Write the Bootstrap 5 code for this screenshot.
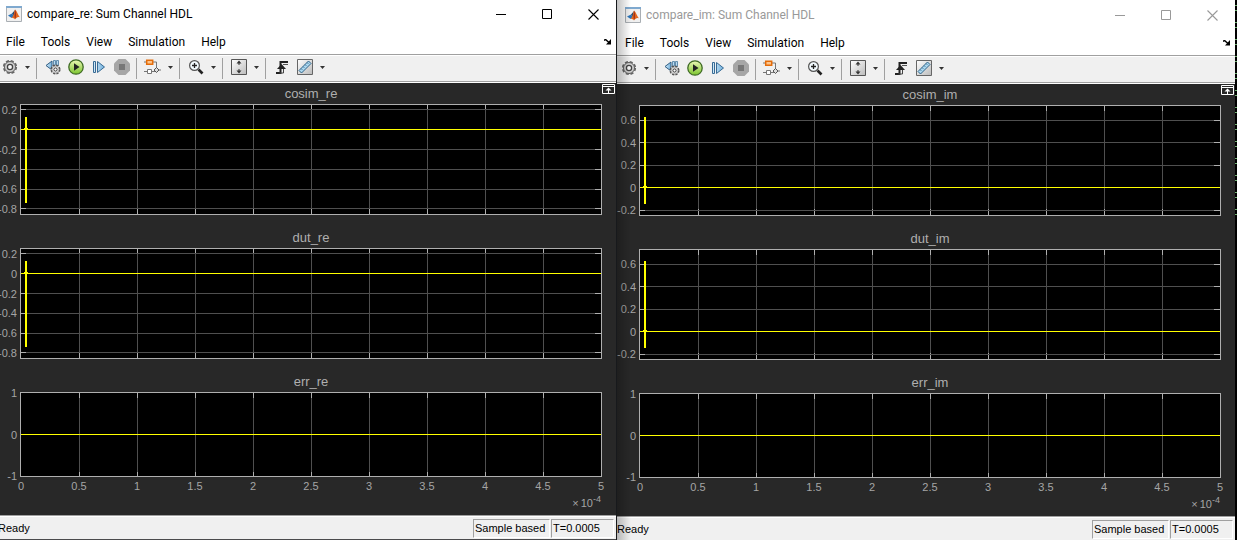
<!DOCTYPE html>
<html lang="en">
<head>
<meta charset="utf-8">
<meta name="viewport" content="width=device-width, initial-scale=1">
<title>Scopes: Sum Channel HDL</title>
<link href="https://cdn.jsdelivr.net/npm/bootstrap@5.3.0/dist/css/bootstrap.min.css" rel="stylesheet">
<style>
  body { background: #4a4a4c; font-family: Roboto, "Noto Sans", sans-serif; font-size: 12px; line-height: 16px; color: #000; }
  .desk { min-height: 100vh; }
  .scope { flex: 1 1 0; min-width: 0; background: #fff; }
  .scope-front { margin-left: -2px; margin-bottom: 1px; }
  .scope-back { padding-top: 1px; }
  .scope-back .shade { position: absolute; inset: 0 auto 0 0; width: 14px; pointer-events: none; background: linear-gradient(90deg, rgba(0,0,0,.24), rgba(0,0,0,0)); }
  .seam { width: 1px; background: #17191c; }
  .edge { width: 2px; background: repeating-linear-gradient(#000 0 11px, #6fb070 11px 12px, #000 12px 16px, #6fb070 16px 17px) 0 -6px / 100% 222px no-repeat, #000; }
  .titlebar { height: 28px; padding-left: 8px; }
  .caption { padding-left: 5px; }
  .winbtn { width: 46px; height: 26px; display: flex; align-items: center; justify-content: center; border: 0; background: none; padding: 0; color: #000; }
  .scope-back .titlebar { color: #999; }
  .scope-back .winbtn { color: #999; }
  .menus { height: 26px; padding-left: 8px; padding-top: 2px; gap: 16px; border: 0; }
  .menus button, .tools button { border: 0; background: none; padding: 0; color: #000; }
  .tools { height: 29px; background: #f0f0f0; border-top: 1px solid #a0a0a0; border-bottom: 1px solid #fff; box-shadow: inset 0 1px #fff, inset 0 -1px #a0a0a0; padding: 0 0 3px 1px; }
  .tools button { display: flex; align-items: center; justify-content: center; height: 22px; width: 23px; }
  .tools button.first { width: 22px; }
  .tools button.drop { width: 18px; margin-left: -3px; }
  .rule { width: 1px; height: 21px; background: #a0a0a0; margin: 2px 4px 0 0; }
  .rule-spaced { margin-left: 3px; }
  .tools svg, .titlebar svg { display: block; }
  .plots { background: #282828; padding: 21px 14px 38px 22px; gap: 33px; overflow: hidden; font-family: "Liberation Sans", Arial, sans-serif; }
  .axes { flex: 111 1 0; min-height: 60px; width: 100%; display: block; overflow: visible; background: #000; border: 1px solid #afafaf; }
  .axes-short { flex-grow: 85; }
  .axes text { font-size: 11px; fill: #a5a5a5; }
  .axes text.head { font-size: 13px; fill: #afafaf; }
  .axes line { shape-rendering: crispEdges; stroke-width: 1px; }
  .grid-line { stroke: #4f4f4f; }
  .tick { stroke: #afafaf; }
  .axes line.trace { stroke: #ff0; }
  .axes line.burst { stroke: #ff0; stroke-width: 2px; }
  .dock { position: absolute; top: 1px; right: 1px; border: 0; padding: 0; background: none; line-height: 0; }
  .statusbar { height: 24px; background: #f0f0f0; border-top: 1px solid #a0a0a0; box-shadow: inset 0 1px #fff; padding: 3px 2px 0 0; font-family: "Liberation Sans", Arial, sans-serif; font-size: 11px; }
  .ready { padding-top: 1px; }
  .cell { height: 19px; border: 1px solid; border-color: #a0a0a0 #fff #fff #a0a0a0; padding-left: 1px; margin-left: 1px; line-height: 17px; }
  .mode { width: 77px; }
  .clock { width: 63px; }
</style>
<script src="https://cdn.jsdelivr.net/npm/bootstrap@5.3.0/dist/js/bootstrap.bundle.min.js"></script>
</head>
<body>
<svg width="0" height="0" class="position-absolute" aria-hidden="true">
  <defs>
    <linearGradient id="metal" x2="1" y2="1"><stop stop-color="#fff"/><stop offset="1" stop-color="#bbb"/></linearGradient>
    <linearGradient id="green" x2="0" y2="1"><stop stop-color="#edf8b8"/><stop offset="1" stop-color="#7ac42c"/></linearGradient>
    <linearGradient id="blue" x2="1"><stop stop-color="#d6edfa"/><stop offset="1" stop-color="#6faedb"/></linearGradient>
    <symbol id="i-matlab" viewBox="0 0 16 16"><path d="M.5.5h15v15H.5z" fill="#f0f0f0" stroke="#a9aeb3"/><path d="M0 0h16v2H0z" fill="#7fa9cf"/><path d="M2 9.500 6 7.500 8 10 5.500 12z" fill="#2b74b8"/><path d="M6 7.500 9 4 8 10z" fill="#224a72"/><path d="M9 3.500C11 5 12 9 14 11.500 12 10.500 10.500 11.500 9 13.500 8.500 12 7 12 5.500 12 8 10 8 6 9 3.500z" fill="#e4651c"/><path d="M9 3.500C10 6 10 9 9.500 12.500 8 12 9 7 9 3.500z" fill="#8c2418"/></symbol>
    <symbol id="i-gear" viewBox="0 0 16 16"><circle cx="8" cy="8" r="6.300" fill="none" stroke="#666" stroke-width="1.600" stroke-dasharray="3.100 1.850"/><circle cx="8" cy="8" r="5.500" fill="#cfcfcf" stroke="#5c5c5c"/><circle cx="8" cy="8" r="2.600" fill="#f8f8f8" stroke="#444" stroke-width="1.300"/></symbol>
    <symbol id="i-drop" viewBox="0 0 5 3"><path d="M0 0h5L2.500 3z" fill="#333"/></symbol>
    <symbol id="i-config" viewBox="0 0 16 16"><path d="M7 2v9L1 6.500z" fill="url(#blue)" stroke="#315d82"/><path d="M8.500 1.500h2v5h-2zM11.500 1.500h2v5h-2z" fill="#b9dbf0" stroke="#47799f" stroke-width=".8"/><circle cx="10.500" cy="10.500" r="4.300" fill="#ddd" stroke="#555" stroke-width="1.500" stroke-dasharray="2.200 1.200"/><circle cx="10.500" cy="10.500" r="3.500" fill="#e8e8e8" stroke="#777" stroke-width=".6"/><circle cx="10.500" cy="10.500" r="1.600" fill="#fff" stroke="#333"/></symbol>
    <symbol id="i-run" viewBox="0 0 16 16"><circle cx="8" cy="8" r="7.200" fill="url(#green)" stroke="#3f6b25" stroke-width="1.300"/><path d="M6 4.200 11.500 8 6 11.800z" fill="#222"/></symbol>
    <symbol id="i-step" viewBox="0 0 14 14"><path d="M1.500 1.500h2v11h-2zM5.500 1.500v11L12.500 7z" fill="url(#blue)" stroke="#376a94"/></symbol>
    <symbol id="i-stop" viewBox="0 0 16 16"><path d="M4.500 0h7L16 4.500v7L11.500 16h-7L0 11.500v-7z" fill="#a6a6a6"/><path d="M5 5h6v6H5z" fill="#777"/></symbol>
    <symbol id="i-blocks" viewBox="0 0 17 16"><path d="M0 3h3M9 3h3.500v8M0 12.500h3M8 12.500h3M14 11h3" stroke="#777" fill="none"/><path d="M2.700 1.200h6v4h-6z" fill="#ffc58a" stroke="#e46c0a" stroke-width="1.500"/><path d="M3.500 10.500h4v4h-4z" fill="#fff" stroke="#777"/><path d="m12.500 8.500 2.500 2.500-2.500 2.500-2.500-2.500z" fill="#ddd" stroke="#555"/></symbol>
    <symbol id="i-zoom" viewBox="0 0 16 16"><circle cx="6.500" cy="6.500" r="4.900" fill="#f3fbff" stroke="#555" stroke-width="1.200"/><path d="M4 6.500h5M6.500 4v5" stroke="#222" stroke-width="1.300"/><path d="m10.500 10.500 4 4" stroke="#222" stroke-width="2.600"/></symbol>
    <symbol id="i-fit" viewBox="0 0 16 16"><path d="M.5.500h15v15H.5z" fill="url(#metal)" stroke="#555"/><path d="M8 1.500 5.500 4.500h2V6h1V4.500h2zM8 14.500 5.500 11.500h2V10h1v1.500h2z" fill="#333"/></symbol>
    <symbol id="i-trigger" viewBox="0 0 14 16"><path d="M1 14h4.500V3H13" fill="none" stroke="#222" stroke-width="2"/><path d="M4.500 14h4V8" fill="none" stroke="#444"/><path d="M2 10h9L6.500 5z" fill="#222"/><path d="M8 5.500h5" stroke="#555"/></symbol>
    <symbol id="i-ruler" viewBox="0 0 16 16"><path d="M.5.500h15v15H.5z" fill="url(#metal)" stroke="#666"/><path d="M2 11.500 11.500 2 14 4.500 4.500 14z" fill="#acd8ef" stroke="#2e6389"/><path d="m4 9.500 1.500 1.500M6 7.500 7.500 9M8 5.500 9.500 7M10 3.500 11.500 5" stroke="#2e6389" stroke-width=".7"/></symbol>
    <symbol id="i-min" viewBox="0 0 11 11"><path d="M0 5.500h10" stroke="currentColor"/></symbol>
    <symbol id="i-max" viewBox="0 0 11 11"><path d="M.5.500h9v9h-9z" fill="none" stroke="currentColor"/></symbol>
    <symbol id="i-close" viewBox="0 0 11 11"><path d="m.5.500 10 10M10.500.500l-10 10" stroke="currentColor" stroke-width="1.100"/></symbol>
    <symbol id="i-corner" viewBox="0 0 8 6"><path d="M0 1.500 1.500.500 5 3.500" fill="none" stroke="#000" stroke-width="1.500"/><path d="M7 0v5.500H2z" fill="#000"/></symbol>
    <symbol id="i-dock" viewBox="0 0 13 10"><path d="M.5.500h12v9H.5zM0 2.500h13M6.500 9V5" fill="none" stroke="#fff"/><path d="M3.500 6.500 6.500 3.500l3 3z" fill="#fff"/></symbol>
  </defs>
</svg>

<main class="desk d-flex"></main>

<template id="scope-template">
  <section class="scope position-relative d-flex flex-column">
    <header class="titlebar d-flex align-items-center">
      <svg width="16" height="16"><use href="#i-matlab"/></svg>
      <span class="caption flex-grow-1 text-nowrap"></span>
      <button class="winbtn" aria-label="Minimize"><svg width="11" height="11"><use href="#i-min"/></svg></button>
      <button class="winbtn" aria-label="Maximize"><svg width="11" height="11"><use href="#i-max"/></svg></button>
      <button class="winbtn" aria-label="Close"><svg width="11" height="11"><use href="#i-close"/></svg></button>
    </header>
    <nav class="menus d-flex align-items-center">
      <button>File</button><button>Tools</button><button>View</button><button>Simulation</button><button>Help</button>
      <button class="ms-auto me-1 d-flex" aria-label="Dock"><svg width="8" height="6"><use href="#i-corner"/></svg></button>
    </nav>
    <div class="tools d-flex align-items-center">
      <button class="first" aria-label="Settings"><svg width="16" height="16"><use href="#i-gear"/></svg></button>
      <button class="drop" aria-label="More settings"><svg width="5" height="3"><use href="#i-drop"/></svg></button>
      <span class="rule"></span>
      <button aria-label="Configure"><svg width="16" height="16"><use href="#i-config"/></svg></button>
      <button aria-label="Run"><svg width="16" height="16"><use href="#i-run"/></svg></button>
      <button aria-label="Step"><svg width="14" height="14"><use href="#i-step"/></svg></button>
      <button aria-label="Stop"><svg width="16" height="16"><use href="#i-stop"/></svg></button>
      <span class="rule rule-spaced"></span>
      <button aria-label="Highlight block"><svg width="17" height="16"><use href="#i-blocks"/></svg></button>
      <button class="drop" aria-label="More blocks"><svg width="5" height="3"><use href="#i-drop"/></svg></button>
      <span class="rule"></span>
      <button aria-label="Zoom"><svg width="16" height="16"><use href="#i-zoom"/></svg></button>
      <button class="drop" aria-label="More zoom"><svg width="5" height="3"><use href="#i-drop"/></svg></button>
      <span class="rule"></span>
      <button aria-label="Scale"><svg width="16" height="16"><use href="#i-fit"/></svg></button>
      <button class="drop" aria-label="More scaling"><svg width="5" height="3"><use href="#i-drop"/></svg></button>
      <span class="rule"></span>
      <button aria-label="Triggers"><svg width="14" height="16"><use href="#i-trigger"/></svg></button>
      <button aria-label="Measurements"><svg width="16" height="16"><use href="#i-ruler"/></svg></button>
      <button class="drop" aria-label="More measurements"><svg width="5" height="3"><use href="#i-drop"/></svg></button>
    </div>
    <div class="plots position-relative d-flex flex-column flex-grow-1">
      <button class="dock" aria-label="Maximize axes"><svg width="13" height="10"><use href="#i-dock"/></svg></button>
    </div>
    <footer class="statusbar d-flex align-items-start">
      <span class="ready flex-grow-1">Ready</span><span class="cell mode">Sample based</span><span class="cell clock">T=0.0005</span>
    </footer>
    <div class="shade"></div>
  </section>
</template>

<script>
  // Each scope: signal suffix, value range, labelled levels and the burst near t = 0.
  const scopes = [
    { part: 're', top: 0.25, bottom: -0.85, ticks: [0.2, 0, -0.2, -0.4, -0.6, -0.8], burst: [0.13, -0.74], kind: 'scope-front' },
    { part: 'im', top: 0.725, bottom: -0.24, ticks: [0.6, 0.4, 0.2, 0, -0.2], burst: [0.63, -0.14], kind: 'scope-back' }
  ];

  function axes(title, a, isLast) {
    const y = v => (a.top - v) / (a.top - a.bottom) * 100 + '%';
    const line = (cls, x1, y1, x2, y2, move = '') =>
      `<line class="${cls}" x1="${x1}" y1="${y1}" x2="${x2}" y2="${y2}" ${move && `transform="translate(${move})"`}/>`;
    let s = `<text class="head" x="50%" y="-7" text-anchor="middle">${title}</text>`;
    for (let i = 1; i < 10; i++) {
      const x = i * 10 + '%';
      s += line('grid-line', x, '0', x, '100%') + line('tick', x, '0', x, '5');
      s += line('tick', x, '100%', x, '95%');
    }
    for (const v of a.ticks) {
      if (v !== a.top && v !== a.bottom)
        s += line('grid-line', '0', y(v), '100%', y(v)) + line('tick', '0', y(v), '5', y(v)) + line('tick', '99%', y(v), '100%', y(v));
      s += `<text x="-4" y="${y(v)}" dy="4" text-anchor="end">${v}</text>`;
    }
    s += line('trace', '0', y(0), '100%', y(0));
    if (a.burst) {
      s += line('burst', '0.9%', y(a.burst[0]), '0.9%', y(a.burst[1]));
      s += line('trace', '0.6%', y(0), '1.2%', y(0), '0 -1');
    }
    if (isLast) {
      for (let i = 0; i <= 10; i++)
        s += `<text x="${i * 10}%" y="100%" dy="14" text-anchor="middle">${i / 2}</text>`;
      s += `<text x="100%" y="100%" dy="31" text-anchor="end">×<tspan dx="2">10</tspan><tspan dy="-5" font-size="9">-4</tspan></text>`;
    }
    return `<svg class="axes ${isLast ? 'axes-short' : ''}" role="img" aria-label="${title}">${s}</svg>`;
  }

  const desk = document.querySelector('.desk');
  scopes.forEach((sc, i) => {
    const node = document.getElementById('scope-template').content.cloneNode(true);
    node.querySelector('.scope').classList.add(sc.kind);
    node.querySelector('.caption').textContent = `compare_${sc.part}: Sum Channel HDL`;
    node.querySelector('.plots').insertAdjacentHTML('beforeend',
      axes(`cosim_${sc.part}`, sc) + axes(`dut_${sc.part}`, sc) +
      axes(`err_${sc.part}`, { top: 1, bottom: -1, ticks: [1, 0, -1] }, true));
    desk.append(node);
    desk.insertAdjacentHTML('beforeend', i ? '<div class="edge"></div>' : '<div class="seam"></div>');
  });
</script>
</body>
</html>
